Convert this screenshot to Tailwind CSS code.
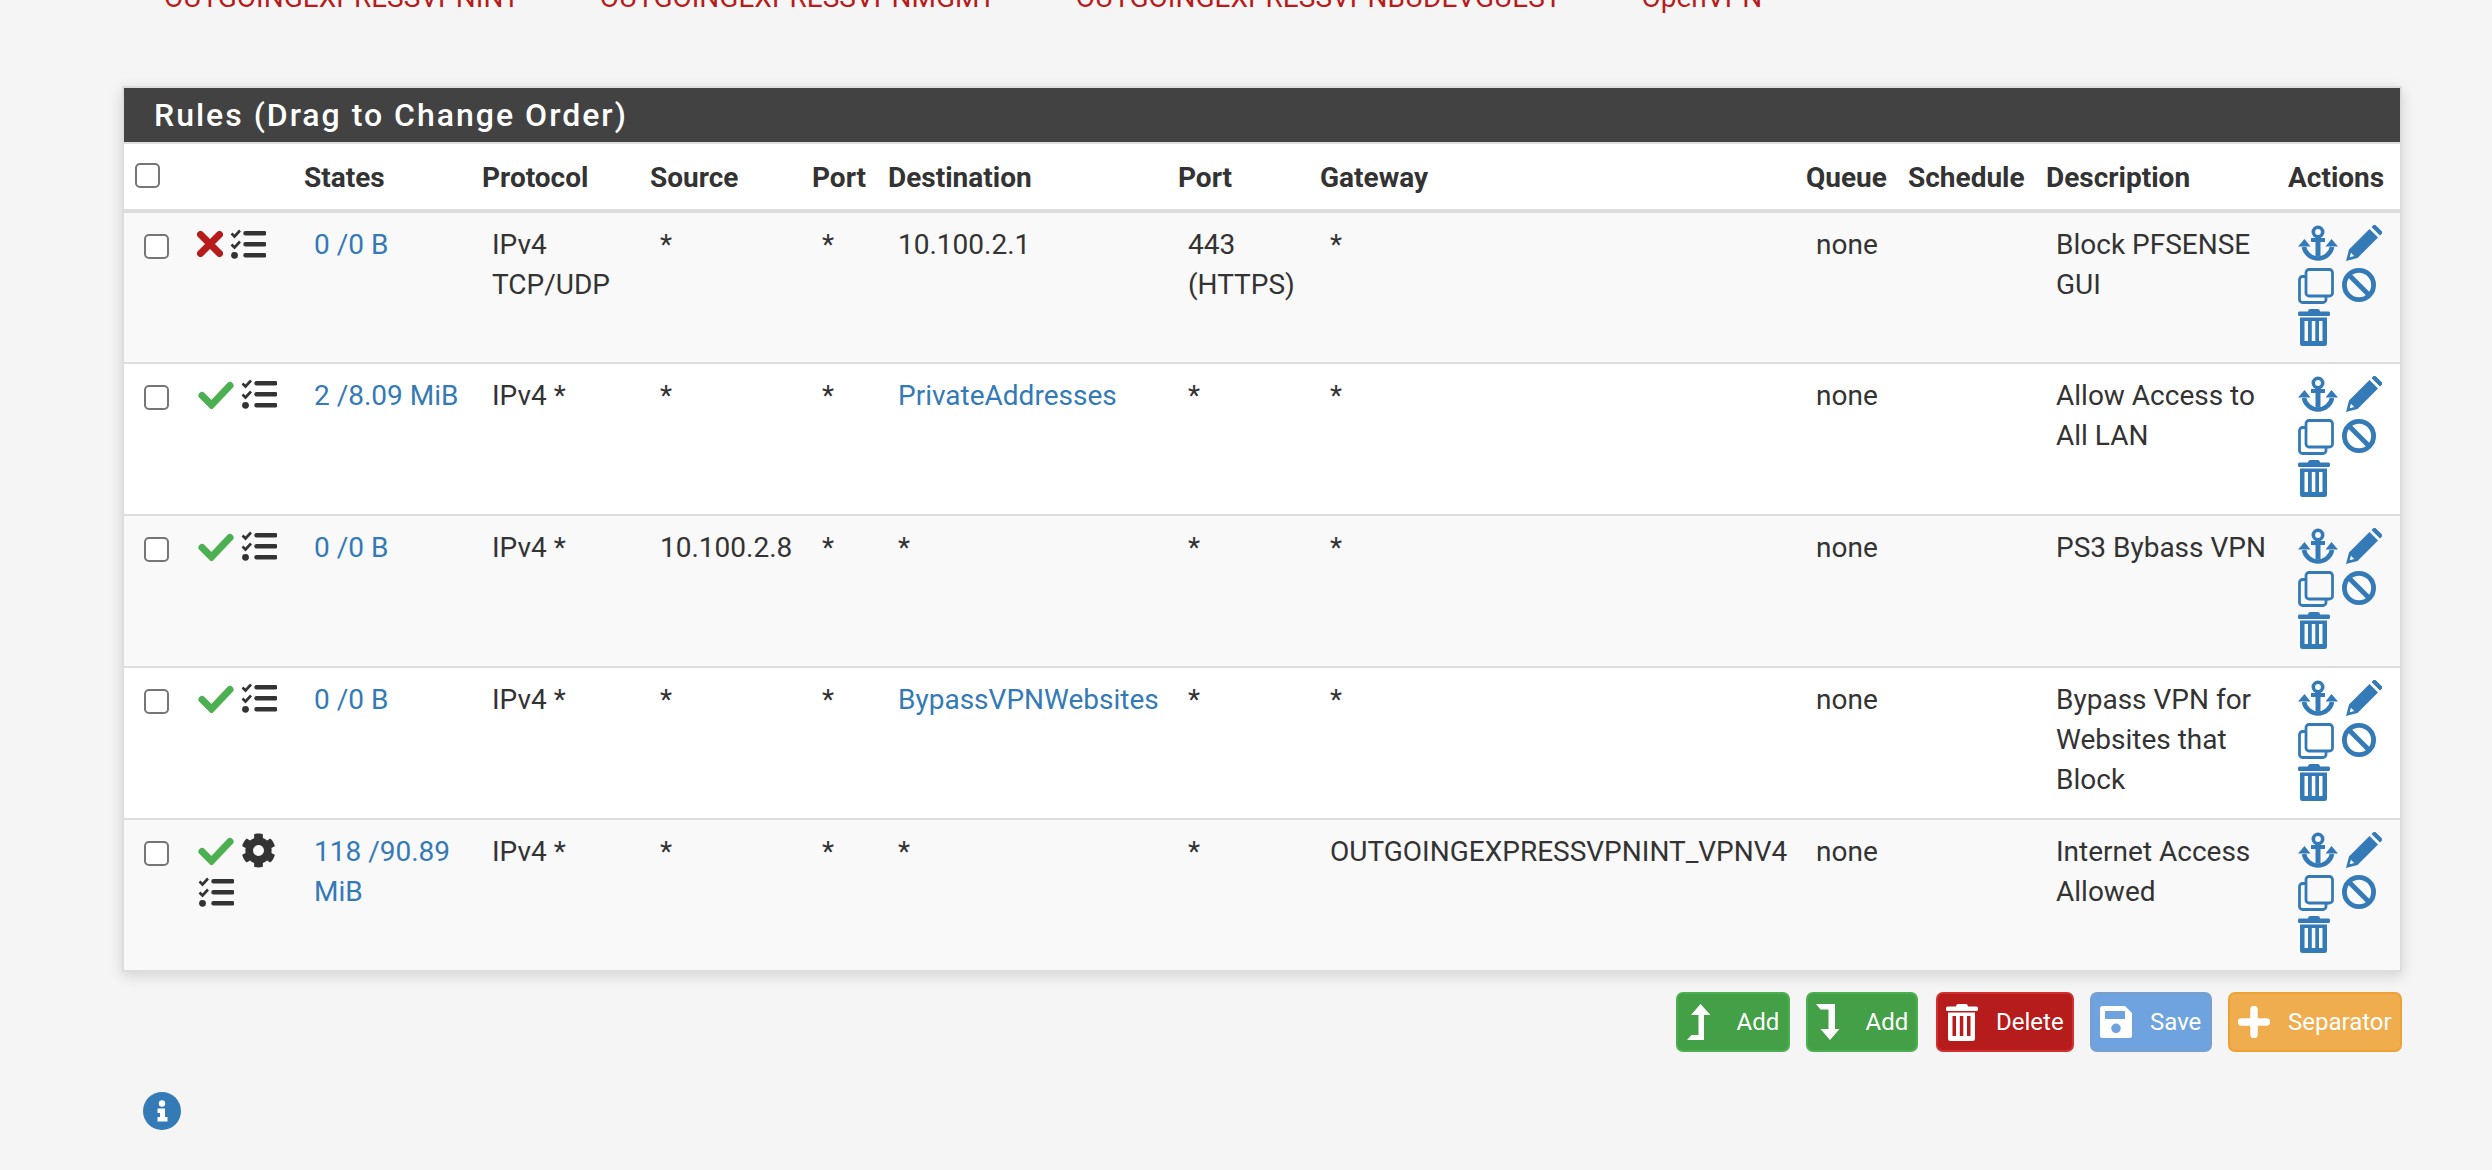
<!DOCTYPE html>
<html lang="en">
<head>
    <meta charset="UTF-8">
    <meta name="viewport" content="width=device-width, initial-scale=1.0">
    <title>Firewall Rules</title>
    <script src="https://cdn.jsdelivr.net/npm/@tailwindcss/browser@4"></script>
</head>
<body class="bg-[#f5f5f5] font-['Roboto',sans-serif] text-[28px] leading-[40px] text-[#333] overflow-hidden">
    <!-- icon sprite -->
    <svg class="hidden">
        <symbol id="i-check" viewBox="0 0 36 28"><path d="M4 14.5 13.5 24 32 4.5" fill="none" stroke="currentColor" stroke-width="7" stroke-linecap="round" stroke-linejoin="miter"/></symbol>
        <symbol id="i-times" viewBox="0 0 26 26"><path d="M3.5 3.5 22.5 22.5M22.5 3.5 3.5 22.5" fill="none" stroke="currentColor" stroke-width="7" stroke-linecap="round"/></symbol>
        <symbol id="i-tasks" viewBox="0 0 36 30">
            <path d="M15.500 2h19a1.500 1.500 0 0 1 0 4.500h-19a1.500 1.500 0 0 1 0-4.500zM15.500 13h19a1.500 1.500 0 0 1 0 4.500h-19a1.500 1.500 0 0 1 0-4.500zM15.500 24h19a1.500 1.500 0 0 1 0 4.500h-19a1.500 1.500 0 0 1 0-4.500z" fill="currentColor"/>
            <path d="M1.500 4.500 4.500 7.500 10 1.500M1.500 15.500 4.500 18.500 10 12.500" fill="none" stroke="currentColor" stroke-width="2.600"/>
            <circle cx="4.500" cy="26.300" r="3.400" fill="currentColor"/>
        </symbol>
        <symbol id="i-cog" viewBox="0 0 512 512"><path fill="currentColor" d="M487.400 315.700l-42.600-24.600c4.300-23.200 4.300-47 0-70.200l42.600-24.600c4.900-2.800 7.100-8.600 5.500-14-11.100-35.600-30-67.800-54.700-94.600-3.800-4.100-10-5.100-14.800-2.300L380.800 110c-17.900-15.400-38.500-27.300-60.800-35.100V25.800c0-5.600-3.900-10.500-9.400-11.700-36.700-8.200-74.300-7.800-109.200 0-5.500 1.200-9.400 6.100-9.400 11.700V75c-22.200 7.900-42.800 19.800-60.800 35.100L88.700 85.500c-4.900-2.800-11-1.900-14.800 2.300-24.700 26.700-43.600 58.900-54.700 94.600-1.700 5.400.6 11.200 5.500 14L67.300 221c-4.300 23.200-4.300 47 0 70.200l-42.600 24.600c-4.900 2.800-7.100 8.600-5.500 14 11.100 35.600 30 67.800 54.700 94.600 3.800 4.100 10 5.100 14.800 2.300l42.600-24.600c17.900 15.400 38.500 27.300 60.800 35.100v49.200c0 5.600 3.900 10.500 9.400 11.700 36.700 8.200 74.300 7.800 109.200 0 5.500-1.200 9.400-6.100 9.400-11.700v-49.200c22.200-7.900 42.800-19.800 60.800-35.100l42.600 24.600c4.900 2.800 11 1.900 14.800-2.300 24.700-26.700 43.600-58.900 54.700-94.600 1.500-5.500-.7-11.300-5.600-14.100zM256 336c-44.100 0-80-35.900-80-80s35.900-80 80-80 80 35.900 80 80-35.900 80-80 80z"/></symbol>
        <symbol id="i-anchor" viewBox="0 0 40 36">
            <circle cx="20" cy="7" r="4.700" fill="none" stroke="currentColor" stroke-width="3.600"/>
            <path d="M13 13h14v4h-4.500v14.500h-5V17H13z" fill="currentColor"/>
            <path d="M6 22c1 6.500 7.500 11.500 14 11.500S33 28.500 34 22" fill="none" stroke="currentColor" stroke-width="4.600"/>
            <path d="M0 21.500 6.500 14l6 7.500zM27.500 21.500 33.500 14l6.500 7.500z" fill="currentColor"/>
        </symbol>
        <symbol id="i-pencil" viewBox="0 0 36 36">
            <path fill-rule="evenodd" fill="currentColor" d="M0 36 3 24.500 23.500 4 32 12.500 11.500 33ZM3.700 32.300 8.300 31 5 27.700Z"/>
            <path fill="currentColor" d="M25.500 2 26.800.700a2.400 2.400 0 0 1 3.400 0l5.100 5.100a2.400 2.400 0 0 1 0 3.400L34 10.500Z"/>
        </symbol>
        <symbol id="i-clone" viewBox="0 0 36 36">
            <rect x="8" y="1.500" width="26.500" height="26.500" rx="3" fill="none" stroke="currentColor" stroke-width="2.800"/>
            <path d="M8 8.500H4.500a3 3 0 0 0-3 3V31.500a3 3 0 0 0 3 3H25a3 3 0 0 0 3-3V28" fill="none" stroke="currentColor" stroke-width="2.800"/>
        </symbol>
        <symbol id="i-ban" viewBox="0 0 34 34">
            <circle cx="17" cy="17" r="14.600" fill="none" stroke="currentColor" stroke-width="4.800"/>
            <path d="M7 7 27 27" stroke="currentColor" stroke-width="4.800"/>
        </symbol>
        <symbol id="i-trash" viewBox="0 0 32 37">
            <path fill="currentColor" d="M10 2.500Q10 0 12 0h8q2 0 2 2.500h8.500a1.500 1.500 0 0 1 1.500 1.500v1.500a1.500 1.500 0 0 1-1.500 1.500H1.500A1.500 1.500 0 0 1 0 5.500V4a1.500 1.500 0 0 1 1.500-1.500z"/>
            <path fill-rule="evenodd" fill="currentColor" d="M2 8.500h27V34.500a2.500 2.500 0 0 1-2.500 2.500h-22A2.500 2.500 0 0 1 2 34.500zM6.500 12v20h3.500V12zM13.800 12v20h3.500V12zM21 12v20h3.500V12z"/>
        </symbol>
        <symbol id="i-levelup" viewBox="0 0 23.500 36"><path fill="currentColor" d="M13.500 0 23.500 11H17V36H0L4.500 31H11.500V11H4Z"/></symbol>
        <symbol id="i-leveldown" viewBox="0 0 23.500 36"><path fill="currentColor" d="M0 0H19V25H23.500L14 36 4.500 25H12.500V5.500H4.500Z"/></symbol>
        <symbol id="i-save" viewBox="0 0 32 32"><path fill="currentColor" fill-rule="evenodd" d="M2.500 0H25L32 7V29.500A2.500 2.500 0 0 1 29.500 32H2.500A2.500 2.500 0 0 1 0 29.500V2.500A2.500 2.500 0 0 1 2.500 0ZM5 5V13H25V5ZM16 17.500a4.800 4.800 0 1 0 0 9.600 4.800 4.800 0 0 0 0-9.600Z"/></symbol>
        <symbol id="i-plus" viewBox="0 0 32 32"><path d="M16 3.500V28.500M3.500 16H28.500" fill="none" stroke="currentColor" stroke-width="7.500" stroke-linecap="round"/></symbol>
    </svg>

    <!-- Interface tabs, scrolled off the top -->
    <div class="h-[86px] overflow-hidden">
        <div class="flex gap-[80px] pl-[164px] mt-[-22px] text-[#b71c1c] whitespace-nowrap">
            <span>OUTGOINGEXPRESSVPNINT</span>
            <span>OUTGOINGEXPRESSVPNMGMT</span>
            <span>OUTGOINGEXPRESSVPNBUDEVGUEST</span>
            <span>OpenVPN</span>
        </div>
    </div>

    <!-- Rules panel -->
    <div class="ml-[122px] w-[2280px] border-2 border-[#ddd] bg-white shadow-[0_4px_14px_rgba(0,0,0,0.14)]">
        <div class="h-[54px] bg-[#424242] pl-[30px] text-[32px] leading-[54px] font-medium tracking-[2px] text-white">Rules (Drag to Change Order)</div>
        <table class="w-full table-fixed border-collapse border-t-2 border-[#ddd]">
            <colgroup>
                <col class="w-[62px]"><col class="w-[108px]"><col class="w-[178px]"><col class="w-[168px]"><col class="w-[162px]"><col class="w-[76px]"><col class="w-[290px]"><col class="w-[142px]"><col class="w-[486px]"><col class="w-[102px]"><col class="w-[138px]"><col class="w-[242px]"><col class="w-[122px]">
            </colgroup>
            <thead>
                <tr class="h-[68px] border-b-4 border-[#ddd] text-left font-bold">
                    <th class="pl-[11px] align-top pt-[19px]"><input type="checkbox" class="block appearance-none w-[25px] h-[25px] rounded-[5px] border-2 border-[#767676] bg-white"></th>
                    <th></th>
                    <th class="pl-[10px] pt-[3px]">States</th>
                    <th class="pl-[10px] pt-[3px]">Protocol</th>
                    <th class="pl-[10px] pt-[3px]">Source</th>
                    <th class="pl-[10px] pt-[3px]">Port</th>
                    <th class="pl-[10px] pt-[3px]">Destination</th>
                    <th class="pl-[10px] pt-[3px]">Port</th>
                    <th class="pl-[10px] pt-[3px]">Gateway</th>
                    <th class="pl-[10px] pt-[3px]">Queue</th>
                    <th class="pl-[10px] pt-[3px]">Schedule</th>
                    <th class="pl-[10px] pt-[3px]">Description</th>
                    <th class="pl-[10px] pt-[3px]">Actions</th>
                </tr>
            </thead>
            <tbody>
                <tr class="h-[152px] bg-[#f9f9f9] border-b-2 border-[#ddd] align-top">
                    <td class="pl-[20px] pt-[21px]"><input type="checkbox" class="block appearance-none w-[25px] h-[25px] rounded-[5px] border-2 border-[#767676] bg-white"></td>
                    <td class="pl-[11px] pt-[16px]">
                        <div class="flex flex-wrap w-[84px] gap-x-[7px]">
                            <svg class="w-[26px] h-[26px] mt-[2px] text-[#b71c1c]"><use href="#i-times"/></svg>
                            <svg class="w-[36px] h-[30px] text-[#333]"><use href="#i-tasks"/></svg>
                        </div>
                    </td>
                    <td class="pl-[20px] pt-[12px]"><a class="text-[#337ab7]">0 /0 B</a></td>
                    <td class="pl-[20px] pt-[12px]">IPv4 TCP/UDP</td>
                    <td class="pl-[20px] pt-[12px]">*</td>
                    <td class="pl-[20px] pt-[12px]">*</td>
                    <td class="pl-[20px] pt-[12px]">10.100.2.1</td>
                    <td class="pl-[20px] pt-[12px]">443<br>(HTTPS)</td>
                    <td class="pl-[20px] pt-[12px]">*</td>
                    <td class="pl-[20px] pt-[12px]">none</td>
                    <td></td>
                    <td class="pl-[20px] pt-[12px]">Block PFSENSE GUI</td>
                    <td class="pl-[20px] pt-[12px]">
                        <div class="grid grid-cols-[44px_40px] grid-rows-[43px_41px_37px] text-[#337ab7]">
                            <svg class="w-[40px] h-[36px]"><use href="#i-anchor"/></svg>
                            <svg class="w-[36px] h-[36px] ml-[4px]"><use href="#i-pencil"/></svg>
                            <svg class="w-[36px] h-[36px]"><use href="#i-clone"/></svg>
                            <svg class="w-[34px] h-[34px]"><use href="#i-ban"/></svg>
                            <svg class="w-[32px] h-[37px]"><use href="#i-trash"/></svg>
                        </div>
                    </td>
                </tr>
                <tr class="h-[152px] bg-white border-b-2 border-[#ddd] align-top">
                    <td class="pl-[20px] pt-[21px]"><input type="checkbox" class="block appearance-none w-[25px] h-[25px] rounded-[5px] border-2 border-[#767676] bg-white"></td>
                    <td class="pl-[12px] pt-[15px]">
                        <div class="flex flex-wrap w-[84px] gap-x-[7px]">
                            <svg class="w-[36px] h-[28px] mt-[2px] text-[#4caf50]"><use href="#i-check"/></svg>
                            <svg class="w-[36px] h-[30px] text-[#333]"><use href="#i-tasks"/></svg>
                        </div>
                    </td>
                    <td class="pl-[20px] pt-[12px]"><a class="text-[#337ab7]">2 /8.09 MiB</a></td>
                    <td class="pl-[20px] pt-[12px]">IPv4 *</td>
                    <td class="pl-[20px] pt-[12px]">*</td>
                    <td class="pl-[20px] pt-[12px]">*</td>
                    <td class="pl-[20px] pt-[12px]"><a class="text-[#337ab7]">PrivateAddresses</a></td>
                    <td class="pl-[20px] pt-[12px]">*</td>
                    <td class="pl-[20px] pt-[12px]">*</td>
                    <td class="pl-[20px] pt-[12px]">none</td>
                    <td></td>
                    <td class="pl-[20px] pt-[12px]">Allow Access to All LAN</td>
                    <td class="pl-[20px] pt-[12px]">
                        <div class="grid grid-cols-[44px_40px] grid-rows-[43px_41px_37px] text-[#337ab7]">
                            <svg class="w-[40px] h-[36px]"><use href="#i-anchor"/></svg>
                            <svg class="w-[36px] h-[36px] ml-[4px]"><use href="#i-pencil"/></svg>
                            <svg class="w-[36px] h-[36px]"><use href="#i-clone"/></svg>
                            <svg class="w-[34px] h-[34px]"><use href="#i-ban"/></svg>
                            <svg class="w-[32px] h-[37px]"><use href="#i-trash"/></svg>
                        </div>
                    </td>
                </tr>
                <tr class="h-[152px] bg-[#f9f9f9] border-b-2 border-[#ddd] align-top">
                    <td class="pl-[20px] pt-[21px]"><input type="checkbox" class="block appearance-none w-[25px] h-[25px] rounded-[5px] border-2 border-[#767676] bg-white"></td>
                    <td class="pl-[12px] pt-[15px]">
                        <div class="flex flex-wrap w-[84px] gap-x-[7px]">
                            <svg class="w-[36px] h-[28px] mt-[2px] text-[#4caf50]"><use href="#i-check"/></svg>
                            <svg class="w-[36px] h-[30px] text-[#333]"><use href="#i-tasks"/></svg>
                        </div>
                    </td>
                    <td class="pl-[20px] pt-[12px]"><a class="text-[#337ab7]">0 /0 B</a></td>
                    <td class="pl-[20px] pt-[12px]">IPv4 *</td>
                    <td class="pl-[20px] pt-[12px]">10.100.2.8</td>
                    <td class="pl-[20px] pt-[12px]">*</td>
                    <td class="pl-[20px] pt-[12px]">*</td>
                    <td class="pl-[20px] pt-[12px]">*</td>
                    <td class="pl-[20px] pt-[12px]">*</td>
                    <td class="pl-[20px] pt-[12px]">none</td>
                    <td></td>
                    <td class="pl-[20px] pt-[12px]">PS3 Bybass VPN</td>
                    <td class="pl-[20px] pt-[12px]">
                        <div class="grid grid-cols-[44px_40px] grid-rows-[43px_41px_37px] text-[#337ab7]">
                            <svg class="w-[40px] h-[36px]"><use href="#i-anchor"/></svg>
                            <svg class="w-[36px] h-[36px] ml-[4px]"><use href="#i-pencil"/></svg>
                            <svg class="w-[36px] h-[36px]"><use href="#i-clone"/></svg>
                            <svg class="w-[34px] h-[34px]"><use href="#i-ban"/></svg>
                            <svg class="w-[32px] h-[37px]"><use href="#i-trash"/></svg>
                        </div>
                    </td>
                </tr>
                <tr class="h-[152px] bg-white border-b-2 border-[#ddd] align-top">
                    <td class="pl-[20px] pt-[21px]"><input type="checkbox" class="block appearance-none w-[25px] h-[25px] rounded-[5px] border-2 border-[#767676] bg-white"></td>
                    <td class="pl-[12px] pt-[15px]">
                        <div class="flex flex-wrap w-[84px] gap-x-[7px]">
                            <svg class="w-[36px] h-[28px] mt-[2px] text-[#4caf50]"><use href="#i-check"/></svg>
                            <svg class="w-[36px] h-[30px] text-[#333]"><use href="#i-tasks"/></svg>
                        </div>
                    </td>
                    <td class="pl-[20px] pt-[12px]"><a class="text-[#337ab7]">0 /0 B</a></td>
                    <td class="pl-[20px] pt-[12px]">IPv4 *</td>
                    <td class="pl-[20px] pt-[12px]">*</td>
                    <td class="pl-[20px] pt-[12px]">*</td>
                    <td class="pl-[20px] pt-[12px]"><a class="text-[#337ab7]">BypassVPNWebsites</a></td>
                    <td class="pl-[20px] pt-[12px]">*</td>
                    <td class="pl-[20px] pt-[12px]">*</td>
                    <td class="pl-[20px] pt-[12px]">none</td>
                    <td></td>
                    <td class="pl-[20px] pt-[12px]">Bypass VPN for Websites that Block</td>
                    <td class="pl-[20px] pt-[12px]">
                        <div class="grid grid-cols-[44px_40px] grid-rows-[43px_41px_37px] text-[#337ab7]">
                            <svg class="w-[40px] h-[36px]"><use href="#i-anchor"/></svg>
                            <svg class="w-[36px] h-[36px] ml-[4px]"><use href="#i-pencil"/></svg>
                            <svg class="w-[36px] h-[36px]"><use href="#i-clone"/></svg>
                            <svg class="w-[34px] h-[34px]"><use href="#i-ban"/></svg>
                            <svg class="w-[32px] h-[37px]"><use href="#i-trash"/></svg>
                        </div>
                    </td>
                </tr>
                <tr class="h-[151px] bg-[#f9f9f9] align-top">
                    <td class="pl-[20px] pt-[21px]"><input type="checkbox" class="block appearance-none w-[25px] h-[25px] rounded-[5px] border-2 border-[#767676] bg-white"></td>
                    <td class="pl-[12px] pt-[13px]">
                        <div class="flex flex-wrap w-[84px] gap-x-[7px] gap-y-[7px]">
                            <svg class="w-[36px] h-[28px] mt-[4px] text-[#4caf50]"><use href="#i-check"/></svg>
                            <svg class="w-[35px] h-[35px] text-[#333]"><use href="#i-cog"/></svg>
                            <svg class="w-[36px] h-[30px] mt-[2px] text-[#333]"><use href="#i-tasks"/></svg>
                        </div>
                    </td>
                    <td class="pl-[20px] pt-[12px]"><a class="text-[#337ab7]">118 /90.89 MiB</a></td>
                    <td class="pl-[20px] pt-[12px]">IPv4 *</td>
                    <td class="pl-[20px] pt-[12px]">*</td>
                    <td class="pl-[20px] pt-[12px]">*</td>
                    <td class="pl-[20px] pt-[12px]">*</td>
                    <td class="pl-[20px] pt-[12px]">*</td>
                    <td class="pl-[20px] pt-[12px]">OUTGOINGEXPRESSVPNINT_VPNV4</td>
                    <td class="pl-[20px] pt-[12px]">none</td>
                    <td></td>
                    <td class="pl-[20px] pt-[12px]">Internet Access Allowed</td>
                    <td class="pl-[20px] pt-[12px]">
                        <div class="grid grid-cols-[44px_40px] grid-rows-[43px_41px_37px] text-[#337ab7]">
                            <svg class="w-[40px] h-[36px]"><use href="#i-anchor"/></svg>
                            <svg class="w-[36px] h-[36px] ml-[4px]"><use href="#i-pencil"/></svg>
                            <svg class="w-[36px] h-[36px]"><use href="#i-clone"/></svg>
                            <svg class="w-[34px] h-[34px]"><use href="#i-ban"/></svg>
                            <svg class="w-[32px] h-[37px]"><use href="#i-trash"/></svg>
                        </div>
                    </td>
                </tr>
            </tbody>
        </table>
    </div>

    <!-- Buttons -->
    <div class="flex justify-end gap-[16px] w-[2402px] mt-[20px] text-[24px] text-white">
        <button class="flex items-center h-[60px] w-[114px] pl-[9px] gap-[26px] rounded-[7px] bg-[#43a047] border-2 border-[#4caf50]">
            <svg class="w-[23.500px] h-[36px]"><use href="#i-levelup"/></svg>Add
        </button>
        <button class="flex items-center h-[60px] w-[112px] pl-[8px] gap-[26px] rounded-[7px] bg-[#43a047] border-2 border-[#4caf50]">
            <svg class="w-[23.500px] h-[36px]"><use href="#i-leveldown"/></svg>Add
        </button>
        <button class="flex items-center h-[60px] w-[138px] pl-[8px] gap-[18px] rounded-[7px] bg-[#b71c1c] border-2 border-[#d32f2f] ml-[2px]">
            <svg class="w-[32px] h-[37px]"><use href="#i-trash"/></svg>Delete
        </button>
        <button class="flex items-center h-[60px] w-[122px] pl-[8px] gap-[18px] rounded-[7px] bg-[#6fa3e0] border-2 border-[#7a9fcf]">
            <svg class="w-[32px] h-[32px]"><use href="#i-save"/></svg>Save
        </button>
        <button class="flex items-center h-[60px] w-[174px] pl-[8px] gap-[18px] rounded-[7px] bg-[#f0ad4e] border-2 border-[#eea236]">
            <svg class="w-[32px] h-[32px]"><use href="#i-plus"/></svg>Separator
        </button>
    </div>

    <!-- Info -->
    <div class="ml-[143px] mt-[40px] w-[38px] h-[38px]">
        <svg class="w-[38px] h-[38px]" viewBox="0 0 38 38">
            <circle cx="19" cy="19" r="19" fill="#337ab7"/>
            <circle cx="19" cy="11.500" r="3.200" fill="#fff"/>
            <path d="M14.500 16.500h7.500V25h2.500v4.500h-10V25H17v-4h-2.500z" fill="#fff"/>
        </svg>
    </div>
</body>
</html>
